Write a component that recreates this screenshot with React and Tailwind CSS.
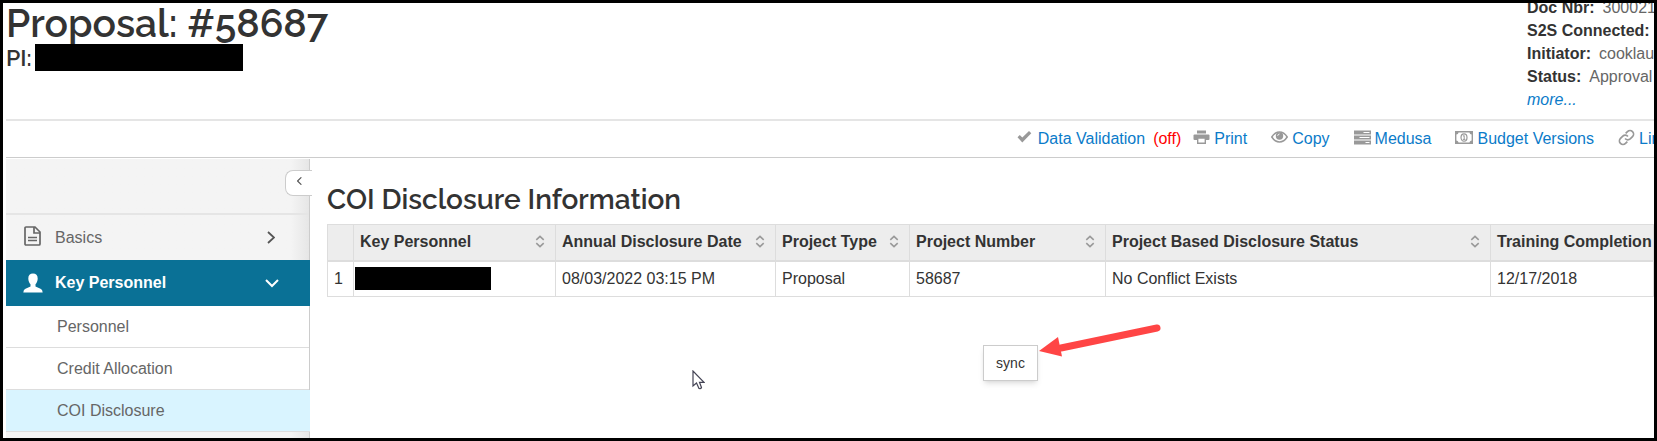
import { HiMiniChevronLeft } from "react-icons/hi2";

const columns = [
  { label: "", width: "w-[26px]" },
  { label: "Key Personnel", width: "w-[202px]" },
  { label: "Annual Disclosure Date", width: "w-[220px]" },
  { label: "Project Type", width: "w-[134px]" },
  { label: "Project Number", width: "w-[196px]" },
  { label: "Project Based Disclosure Status", width: "w-[385px]" },
  { label: "Training Completion Date", width: "" },
];

const subItems = ["Personnel", "Credit Allocation", "COI Disclosure"];

const CheckIcon = () => (
  <svg viewBox="0 0 15 12" className="w-[15px] h-3" fill="#999">
    <path d="M0.5 6.3 L2.8 4 L5.3 6.5 L12 0 L14.3 2.3 L5.3 11.4 Z" />
  </svg>
);

const PrintIcon = () => (
  <svg viewBox="0 0 17 14" className="w-[17px] h-3.5" fill="#999">
    <path d="M4 0.5h9v3H4z" />
    <path d="M1.5 4.500h14q1 0 1 1v3.500q0 1-1 1H1.500q-1 0-1-1v-3.500q0-1 1-1z" />
    <path d="M4.700 8h7.600v5.200H4.700z" fill="#fff" stroke="#999" strokeWidth="1.400" />
  </svg>
);

const EyeIcon = () => (
  <svg viewBox="0 0 17 12" className="w-[17px] h-3" fill="none" stroke="#999">
    <path d="M0.800 6Q4 1 8.500 1T16.200 6Q13 11 8.500 11T0.800 6z" strokeWidth="1.500" />
    <circle cx="8.500" cy="5" r="3.700" fill="#999" stroke="none" />
    <path d="M6.700 4.800Q6.800 3.200 8.500 3" stroke="#fff" strokeWidth="0.900" />
  </svg>
);

const TasksIcon = () => (
  <svg viewBox="0 0 17 15" className="w-[17px] h-[15px]">
    <path d="M0 0.500h17v4H0zM0 5.500h17v4H0zM0 10.500h17v4H0z" fill="#999" />
    <path d="M9.500 2h6v1h-6zM5.500 7h10v1h-10zM11.500 12h4v1h-4z" fill="#fff" />
  </svg>
);

const MoneyIcon = () => (
  <svg viewBox="0 0 18 13" className="w-[18px] h-[13px]" fill="none" stroke="#999">
    <path d="M0.700 0.700h16.600v11.600H0.700z" strokeWidth="1.400" />
    <path d="M1 1h2.500Q3.500 3.500 1 3.500zM17 1h-2.500Q14.500 3.500 17 3.500zM1 12h2.500Q3.500 9.500 1 9.500zM17 12h-2.500Q14.500 9.500 17 9.500z" fill="#999" stroke="none" />
    <ellipse cx="9" cy="6.500" rx="3" ry="3.700" strokeWidth="1.200" />
    <path d="M8 5.200l1.200-0.700v3.700M7.800 8.400h2.600" />
  </svg>
);

const LinkIcon = () => (
  <svg viewBox="0 0 24 24" className="size-[17px]" fill="none" stroke="#999" strokeWidth="2.400">
    <path d="M10 13.500a5 5 0 0 0 7.200 0.500l3.300-3.300a5 5 0 0 0-7.100-7.100l-2.600 2.600" />
    <path d="M14 10.500a5 5 0 0 0-7.200-0.500l-3.300 3.300a5 5 0 0 0 7.100 7.100l2.600-2.600" />
  </svg>
);

const FileIcon = () => (
  <svg viewBox="0 0 17 20" className="w-[17px] h-5" fill="none" stroke="#666" strokeWidth="1.700">
    <path d="M1 2Q1 1 2 1H11L16 6V18Q16 19 15 19H2Q1 19 1 18Z" />
    <path d="M10 1V7H16M4 11.500H13M4 14.500H13" />
  </svg>
);

const PersonIcon = () => (
  <svg viewBox="0 0 20 20" className="size-5" fill="#fff">
    <path d="M10 0.500C7 0.500 5.300 2.300 5.300 5.500C5.300 8 6.300 10 7.500 11.300V13.500L2.500 15.700Q0.500 16.500 0.300 19.500H19.700Q19.500 16.500 17.500 15.700L12.500 13.500V11.300C13.700 10 14.700 8 14.700 5.500C14.700 2.300 13 0.500 10 0.500Z" />
  </svg>
);

const SortIcon = () => (
  <svg viewBox="0 0 10 14" className="w-2.5 h-3.5 shrink-0 pb-px" fill="none" stroke="#999" strokeWidth="1.700">
    <path d="M1 5.200L5 1.500L9 5.200M1 8.800L5 12.500L9 8.800" />
  </svg>
);

const toolbarItems = [
  { label: "Print", icon: <PrintIcon /> },
  { label: "Copy", icon: <EyeIcon /> },
  { label: "Medusa", icon: <TasksIcon /> },
  { label: "Budget Versions", icon: <MoneyIcon /> },
];

const Header = () => (
  <header className="flex justify-between border-b-2 border-[#e5e5e5]">
    <div className="text-[#333] font-[Raleway,Lato,sans-serif]">
      <h1 className="text-[39px] leading-10 font-semibold">Proposal: #58687</h1>
      <div className="flex pt-px text-[23px] leading-[27px] font-semibold">
        <span className="w-[29px]">PI:</span>
        <span className="w-52 h-[27px] bg-black" />
      </div>
    </div>
    <div className="w-[127px] -mt-[7px] pb-2 leading-[23px] whitespace-nowrap text-[#666] overflow-hidden">
      <p><b className="mr-2 text-[#333]">Doc Nbr:</b>300021</p>
      <p><b className="text-[#333]">S2S Connected:</b></p>
      <p><b className="mr-2 text-[#333]">Initiator:</b>cooklau</p>
      <p><b className="mr-2 text-[#333]">Status:</b>Approval</p>
      <a href="#more" className="italic text-[#0b7bc9]">more...</a>
    </div>
  </header>
);

const Toolbar = () => (
  <nav className="flex justify-end gap-6 h-9 items-center whitespace-nowrap text-[#0b7bc9] overflow-hidden">
    <div className="flex items-center -mr-3">
      <a href="#validation" className="flex items-center gap-1.5">
        <span className="pb-1"><CheckIcon /></span>
        Data Validation
      </a>
      <span className="ml-2 text-[#f00]">(off)</span>
    </div>
    {toolbarItems.map((item) => (
      <a key={item.label} href="#tool" className="flex items-center gap-1">
        <span className="pb-1">{item.icon}</span>
        {item.label}
      </a>
    ))}
    <a href="#link" className="flex items-center gap-1 w-9 overflow-hidden">
      <span className="shrink-0 pb-1"><LinkIcon /></span>
      Link
    </a>
  </nav>
);

const Sidebar = () => (
  <aside className="relative flex flex-col w-[304px] shrink-0 border-r border-[#ccc] bg-linear-to-l from-[#e6e6e6] to-[#f4f4f4] to-[18px] text-[#666]">
    <button
      aria-label="Collapse menu"
      className="absolute top-[11px] -right-[3px] w-[27px] h-[26px] pl-1.5 rounded-l-lg border border-r-0 border-[#ccc] bg-white"
    >
      <HiMiniChevronLeft className="size-4 mb-1 text-[#555]" />
    </button>
    <a href="#basics" className="flex items-center h-[47px] mt-[54px] pl-[18px] pr-[34px] border-t-2 border-[#e5e5e5]">
      <span className="pb-1"><FileIcon /></span>
      <span className="ml-3.5 grow">Basics</span>
      <svg viewBox="0 0 8 13" className="w-2 h-[13px]" fill="none" stroke="#555" strokeWidth="1.800">
        <path d="M1 1L7 6.500L1 12" />
      </svg>
    </a>
    <a href="#personnel" className="flex items-center h-[46px] pl-[17px] pr-[31px] -mr-px bg-[#0a7196] text-white font-bold">
      <PersonIcon />
      <span className="ml-3 grow">Key Personnel</span>
      <svg viewBox="0 0 14 9" className="w-3.5 h-[9px]" fill="none" stroke="#fff" strokeWidth="2">
        <path d="M1 1L7 7L13 1" />
      </svg>
    </a>
    {subItems.map((item) => (
      <a
        key={item}
        href="#item"
        className={`flex items-center h-[42px] pl-[51px] border-b border-[#ddd] ${
          item === "COI Disclosure" ? "bg-[#d9f4ff] -mr-px" : "bg-white"
        }`}
      >
        {item}
      </a>
    ))}
  </aside>
);

const DisclosureTable = () => (
  <table className="w-full table-fixed border-collapse text-[#333] whitespace-nowrap">
    <thead>
      <tr className="h-9 bg-[#ededed]">
        {columns.map((col) => (
          <th key={col.label} className={`${col.width} border border-b-2 border-[#ddd] px-1.5 text-left overflow-hidden`}>
            {col.label && (
              <div className="flex items-center justify-between pr-1">
                {col.label}
                <SortIcon />
              </div>
            )}
          </th>
        ))}
      </tr>
    </thead>
    <tbody>
      <tr className="h-9 *:border *:border-[#ddd] *:px-1.5">
        <td>1</td>
        <td>
          <div className="w-[136px] h-[23px] -ml-[5px] bg-black" />
        </td>
        <td>08/03/2022 03:15 PM</td>
        <td>Proposal</td>
        <td>58687</td>
        <td>No Conflict Exists</td>
        <td>12/17/2018</td>
      </tr>
    </tbody>
  </table>
);

const App = () => {
  return (
    <div className="flex flex-col min-h-screen border-3 border-black bg-white pl-[3px] overflow-hidden text-base font-['Liberation_Sans',Arial,sans-serif]">
      <Header />
      <Toolbar />
      <div className="flex grow border-t border-[#ccc] pt-px">
        <Sidebar />
        <main className="relative grow min-w-0 pl-[17px] pt-[23px]">
          <h2 className="mb-1.5 text-[28px] leading-9 font-semibold text-[#333] font-[Raleway,Lato,sans-serif]">
            COI Disclosure Information
          </h2>
          <DisclosureTable />
          <div className="flex justify-center mt-12 pl-10">
            <div className="relative">
              <button className="px-3 h-9 border border-[#ccc] bg-white text-sm text-[#333] shadow-md">sync</button>
              {/* arrow pointing at the sync button */}
              <svg viewBox="0 0 124 38" className="absolute left-full -top-[26px] w-[124px] h-[38px]">
                <path d="M23 29L119 9" stroke="#ff4545" strokeWidth="7" strokeLinecap="round" />
                <path d="M1 32L20 18L24 37.500Z" fill="#ff4545" />
              </svg>
            </div>
          </div>
          <svg viewBox="0 0 13 20" className="absolute left-[382px] top-[211px] w-[13px] h-5">
            <path d="M1 1V16L4.500 13L7 18.500Q9 19 9.500 17.500L7.500 12.300H12Z" fill="#fff" stroke="#445" strokeWidth="1.200" />
          </svg>
        </main>
      </div>
    </div>
  );
};

export default App;
